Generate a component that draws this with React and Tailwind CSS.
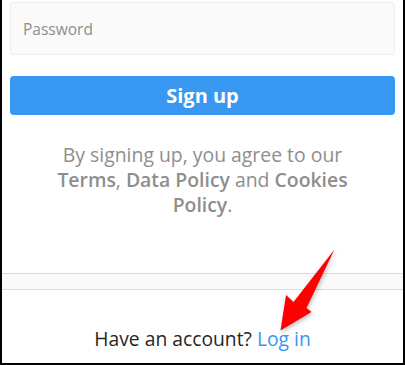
export default function App() {
  return (
    <div
      className="relative h-[365px] w-[405px] overflow-hidden border-x-2 border-b-2 border-black bg-white text-[#262626]"
      style={{ fontFamily: '"Open Sans", "Noto Sans", sans-serif' }}
    >
      <div className="flex h-[274px] flex-col border-b border-[#dbdbdb] px-[8px] pt-[2px]">
        <div className="flex h-[53px] items-center rounded-[3px] border border-[#efefef] bg-[#fafafa] px-[12px] pt-[3px] text-[15.5px] text-[#8e8e8e]">
          Password
        </div>
        <button
          type="button"
          className="mt-[21px] h-[39px] rounded-[4px] bg-[#3897f0] text-[20px] font-bold text-white"
        >
          Sign up
        </button>
        <p className="mx-auto mt-[27px] w-[296px] text-center text-[19.4px] leading-[25px] text-[#8e8e8e]">
          By signing up, you agree to our <b className="font-semibold">Terms</b>,{" "}
          <b className="font-semibold">Data Policy</b> and <b className="font-semibold">Cookies Policy</b>.
        </p>
      </div>
      <div className="h-[15px] bg-[#fafafa]" />
      <div className="flex h-[74px] items-end justify-center border-t border-[#dbdbdb] pb-[9px] text-[19.3px]">
        <p>
          Have an account? <a className="text-[#3897f0]">Log in</a>
        </p>
      </div>
      <svg
        className="absolute left-0 top-0"
        width="405"
        height="365"
        viewBox="0 0 405 365"
        style={{ filter: "drop-shadow(1px 2px 2px rgba(0,0,0,0.25))" }}
      >
        <polygon
          points="332.5,249.5 304.5,308 309.5,312 278.5,330.5 284,295 291.5,302"
          fill="#ff0000"
        />
      </svg>
    </div>
  );
}
